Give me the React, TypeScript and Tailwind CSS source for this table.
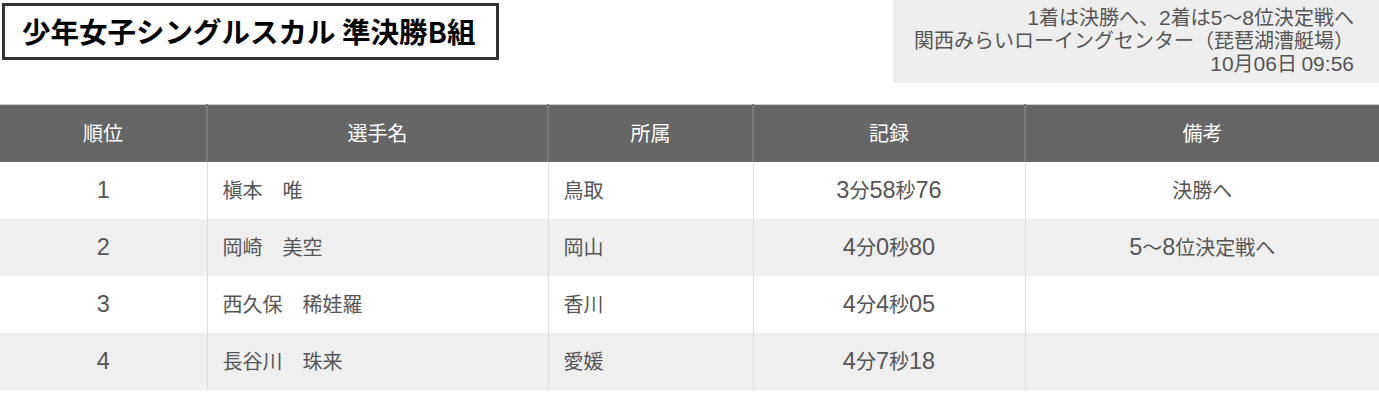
const rows = [
  { rank: '1', name: '槇本　唯', team: '鳥取', time: '3分58秒76', note: '決勝へ' },
  { rank: '2', name: '岡崎　美空', team: '岡山', time: '4分0秒80', note: '5〜8位決定戦へ' },
  { rank: '3', name: '西久保　稀娃羅', team: '香川', time: '4分4秒05', note: '' },
  { rank: '4', name: '長谷川　珠来', team: '愛媛', time: '4分7秒18', note: '' },
]

// latin digits in the reference are set noticeably larger than the kanji around them
function Mixed({ text, size }: { text: string; size: 'sm' | 'lg' }) {
  const parts = text.split(/([0-9:]+)/)
  return (
    <>
      {parts.map((p, i) =>
        /^[0-9:]+$/.test(p) ? (
          <span
            key={i}
            className={size === 'lg' ? 'text-[23.5px] leading-none' : 'text-[21px] leading-none'}
            style={{ fontFamily: '"Liberation Sans", sans-serif' }}
          >
            {p}
          </span>
        ) : (
          <span key={i}>{p}</span>
        ),
      )}
    </>
  )
}

export default function App() {
  return (
    <div
      className="w-[1379px] bg-white"
      style={{ fontFamily: '"Noto Sans CJK JP", "Noto Sans", sans-serif' }}
    >
      {/* Heading + race info */}
      <div className="flex items-start justify-between">
        <div className="mt-[3px] ml-[2px] w-[497px] h-[57px] border-[3px] border-[#333] flex items-center pl-[17px]">
          <h1 className="text-[28.5px] font-bold text-black leading-none whitespace-nowrap">
            少年女子シングルスカル 準決勝B組
          </h1>
        </div>
        <div className="w-[486px] h-[83px] bg-[#eee] pr-[25px] pt-[5px] text-right text-[20px] leading-[23px] text-[#555] whitespace-nowrap">
          <p><Mixed text="1着は決勝へ、2着は5〜8位決定戦へ" size="sm" /></p>
          <p>関西みらいローイングセンター（琵琶湖漕艇場）</p>
          <p><Mixed text="10月06日 09:56" size="sm" /></p>
        </div>
      </div>

      {/* Results */}
      <table className="mt-[21px] w-[1379px] table-fixed border-collapse border-t border-[#ccc] text-[20px]">
        <colgroup>
          <col className="w-[207px]" />
          <col className="w-[341px]" />
          <col className="w-[205px]" />
          <col className="w-[272px]" />
          <col className="w-[354px]" />
        </colgroup>
        <thead>
          <tr className="h-[57px] bg-[#666] text-white">
            <th className="font-normal text-center">順位</th>
            <th className="font-normal text-center border-l-2 border-[#7a7a7a]">選手名</th>
            <th className="font-normal text-center border-l-2 border-[#7a7a7a]">所属</th>
            <th className="font-normal text-center border-l-2 border-[#7a7a7a]">記録</th>
            <th className="font-normal text-center border-l-2 border-[#7a7a7a]">備考</th>
          </tr>
        </thead>
        <tbody className="text-[#555]">
          {rows.map((r, i) => (
            <tr key={r.rank} className={i % 2 === 1 ? 'h-[57px] bg-[#efefef]' : 'h-[57px] bg-white'}>
              <td className="text-center"><Mixed text={r.rank} size="lg" /></td>
              <td className="pl-[15px] border-l border-[#ddd]">{r.name}</td>
              <td className="pl-[15px] border-l border-[#ddd]">{r.team}</td>
              <td className="text-center border-l border-[#ddd]"><Mixed text={r.time} size="lg" /></td>
              <td className="text-center border-l border-[#ddd]"><Mixed text={r.note} size="lg" /></td>
            </tr>
          ))}
        </tbody>
      </table>
    </div>
  )
}
